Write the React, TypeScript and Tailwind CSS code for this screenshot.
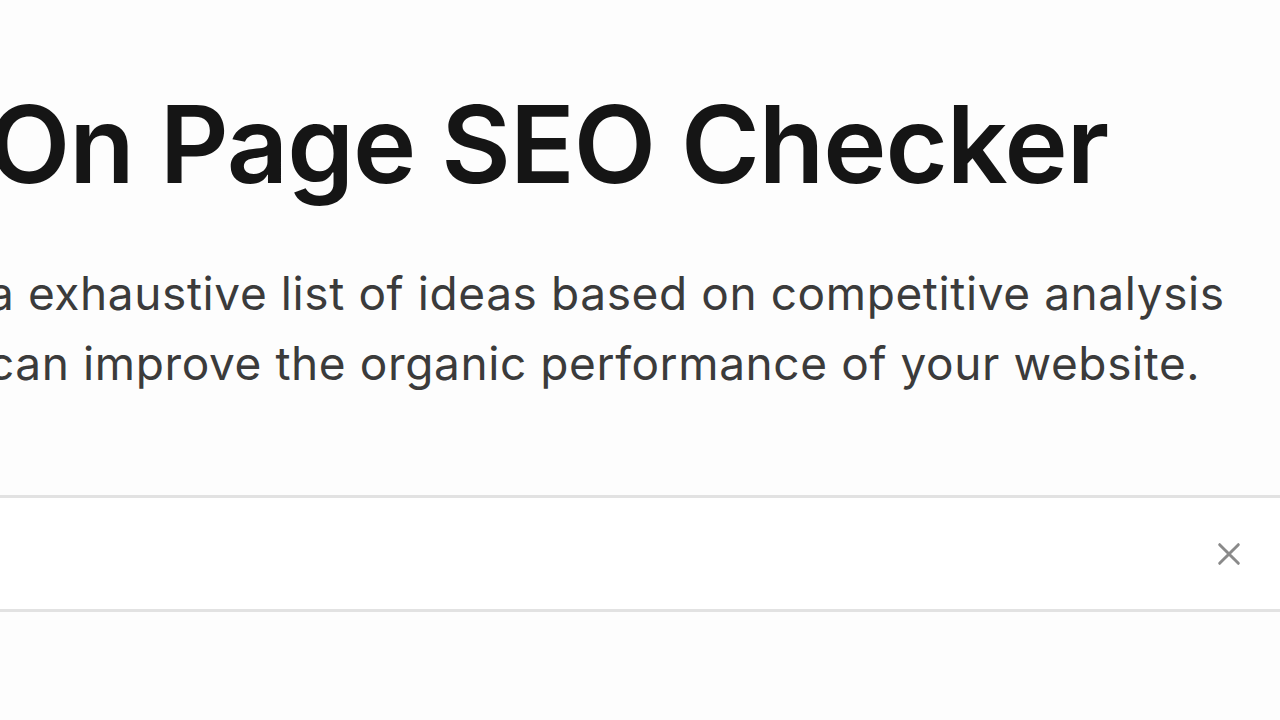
import React from "react";

const App = () => {
  return (
    <div className="w-[1280px] h-[720px] overflow-hidden bg-[#fdfdfd] font-['Inter',sans-serif]">
      <div className="-ml-[12px] w-[1320px] pt-[80px]">
        <h1 className="text-[107px] leading-[1.2] font-semibold tracking-[-1px] text-[#151515]">
          On Page SEO Checker
        </h1>
        <p className="mt-[50px] text-[46px] leading-[70px] text-[#3b3b3b] tracking-[0.6px]">
          a exhaustive list of ideas based on competitive analysis
          <br />
          can improve the organic performance of your website.
        </p>
        <div className="mt-[97px] flex h-[117px] items-center justify-end border-y-[3px] border-[#e2e2e2] bg-white pr-[63px]">
          <svg width="32" height="32" viewBox="0 0 24 24" fill="none" stroke="#8a8a8a" strokeWidth="2.2" strokeLinecap="round">
            <path d="M5 5l14 14M19 5L5 19" />
          </svg>
        </div>
      </div>
    </div>
  );
};

export default App;
